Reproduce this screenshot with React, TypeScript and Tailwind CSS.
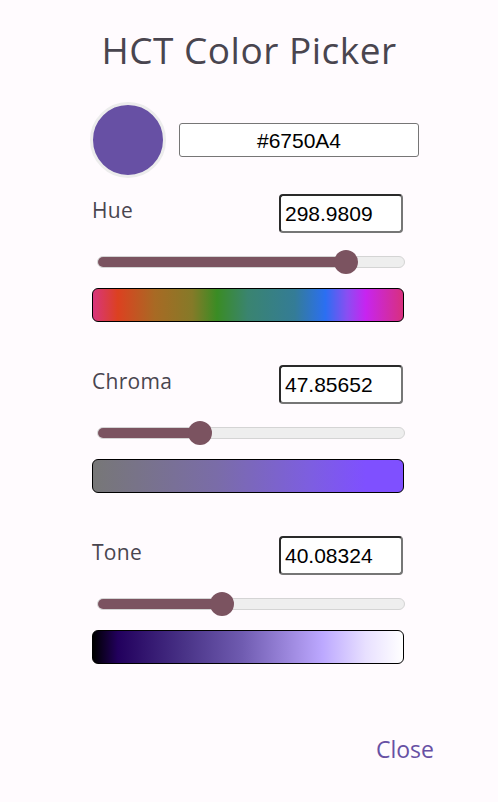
import { useState } from 'react';

const font = { fontFamily: '"Open Sans", "Noto Sans", sans-serif' };

type Channel = {
  label: string;
  value: string;
  pct: number;
  gradient: string;
};

const channels: Channel[] = [
  {
    label: 'Hue',
    value: '298.9809',
    pct: 80.8,
    gradient:
      'bg-[linear-gradient(90deg,#d8357c_0%,#dc4120_8%,#a86a24_20%,#857a28_32%,#3a8c24_40%,#3a8470_50%,#347c96_65%,#2b6ff2_75%,#8a4ef2_82%,#c724f0_88%,#d8307e_100%)]',
  },
  {
    label: 'Chroma',
    value: '47.85652',
    pct: 33.4,
    gradient: 'bg-[linear-gradient(90deg,#777777_0%,#7a6ca8_40%,#7d5ee0_70%,#7f50ff_88%,#7f50ff_100%)]',
  },
  {
    label: 'Tone',
    value: '40.08324',
    pct: 40.6,
    gradient:
      'bg-[linear-gradient(90deg,#000000_0%,#22005d_8%,#4a3488_30%,#6f5bb0_48%,#a590e6_66%,#bca8ff_74%,#e8e0ff_88%,#ffffff_100%)]',
  },
];

function Slider({ pct }: { pct: number }) {
  return (
    <div className="relative ml-[5px] mr-[-1px] h-[24px] flex items-center">
      <div className="w-full h-[12px] rounded-full bg-[#eeeeee] border border-[#d4d4d4] overflow-hidden">
        <div className="h-full bg-[#7b5360]" style={{ width: `${pct}%` }} />
      </div>
      <div
        className="absolute top-0 w-[24px] h-[24px] rounded-full bg-[#7b5360] -translate-x-1/2"
        style={{ left: `${pct}%` }}
      />
    </div>
  );
}

function ChannelRow({ ch }: { ch: Channel }) {
  return (
    <div className="flex flex-col">
      <div className="flex items-start justify-between h-[39px]">
        <span className="text-[21px] text-[#49454f] mt-[2px] leading-[28px] tracking-[0.3px]" style={font}>
          {ch.label}
        </span>
        <div className="w-[124px] h-[39px] rounded-[4px] border-2 border-t-[#2a2a2a] border-l-[#2a2a2a] border-b-[#767676] border-r-[#767676] bg-white flex items-center px-[4px] mr-[1px]">
          <span className="text-[21px] text-black leading-none" style={{ fontFamily: '"Liberation Sans", Arial, sans-serif' }}>
            {ch.value}
          </span>
        </div>
      </div>
      <div className="mt-[17px]">
        <Slider pct={ch.pct} />
      </div>
      <div className={`mt-[14px] h-[34px] rounded-[6px] border border-black ${ch.gradient}`} />
    </div>
  );
}

export default function App() {
  const [hex] = useState('#6750A4');
  return (
    <div className="w-[498px] h-[802px] bg-[#fffbfe] flex flex-col">
      <h1 className="text-center text-[37px] text-[#49454f] mt-[24px] leading-[52px] tracking-[0.5px]" style={font}>
        HCT Color Picker
      </h1>
      <div className="flex items-center mt-[26px] ml-[90px] mr-[79px]">
        <div className="w-[76px] h-[76px] rounded-full bg-[#6750a4] border-[3px] border-[#ececec] shrink-0" />
        <div className="ml-[13px] flex-1 h-[34px] bg-white border border-[#767676] rounded-[3px] flex items-center justify-center">
          <span className="text-[21px] text-black leading-none" style={{ fontFamily: '"Liberation Sans", Arial, sans-serif' }}>
            {hex}
          </span>
        </div>
      </div>
      <div className="ml-[92px] mr-[94px] mt-[16px] flex flex-col gap-[43px]">
        {channels.map((ch) => (
          <ChannelRow key={ch.label} ch={ch} />
        ))}
      </div>
      <div className="flex justify-end mt-[70px] mr-[64px]">
        <span className="text-[23px] font-medium text-[#6750a4] leading-[30px]" style={font}>
          Close
        </span>
      </div>
    </div>
  );
}
